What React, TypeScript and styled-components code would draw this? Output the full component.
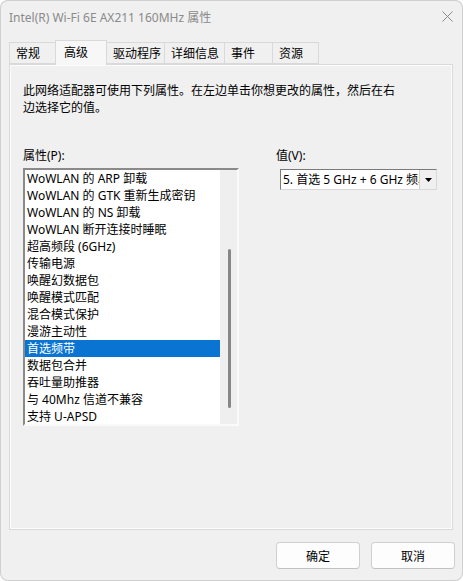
import React from "react";
import styled, { createGlobalStyle } from "styled-components";

const GlobalStyle = createGlobalStyle`
  html, body {
    margin: 0;
    padding: 0;
    background: #ffffff;
  }
  * { box-sizing: border-box; }
`;

const FONT = `"Noto Sans", "Noto Sans CJK SC", sans-serif`;

const Window = styled.div`
  width: 463px;
  height: 581px;
  background: #f0f0f0;
  display: flex;
  flex-direction: column;
  border-radius: 8px;
  box-shadow: inset 0 0 0 1px #cfcfcf;
  overflow: hidden;
  font-family: ${FONT};
  font-size: 12px;
  color: #000;
`;

const TitleBar = styled.div`
  height: 32px;
  padding: 0 9px 0 9px;
  display: flex;
  align-items: center;
  justify-content: space-between;
`;

const Title = styled.span`
  font-size: 12px;
  color: #8a8a8a;
  padding-top: 1px;
`;

const CloseBtn = styled.div`
  width: 20px;
  height: 20px;
  display: flex;
  align-items: center;
  justify-content: center;
  margin-right: -3px;
`;

const TabStrip = styled.div`
  margin-top: 8px;
  padding-left: 9px;
  height: 24px;
  display: flex;
  align-items: flex-end;
  position: relative;
  z-index: 2;
`;

const Tab = styled.div<{ $w: number; $active?: boolean }>`
  width: ${(p) => p.$w}px;
  height: ${(p) => (p.$active ? 25 : 22)}px;
  margin-bottom: ${(p) => (p.$active ? -1 : 0)}px;
  margin-left: -1px;
  &:first-child { margin-left: 0; }
  padding-left: ${(p) => (p.$active ? 8 : 6)}px;
  padding-top: ${(p) => (p.$active ? 3 : 2)}px;
  border: 1px solid #d9d9d9;
  border-bottom: ${(p) => (p.$active ? "none" : "1px solid #d9d9d9")};
  background: ${(p) => (p.$active ? "#f7f7f7" : "#f0f0f0")};
  position: relative;
  z-index: ${(p) => (p.$active ? 2 : 1)};
  font-size: 12px;
  line-height: 17px;
  white-space: nowrap;
`;

const Panel = styled.div`
  margin: 0 10px 0 9px;
  height: 466px;
  border: 1px solid #dadada;
  box-shadow: inset 1px 1px 0 #fbfbfb, inset -1px -1px 0 #fbfbfb;
  background: #f0f0f0;
  padding: 17px 13px;
  display: flex;
  flex-direction: column;
`;

const Description = styled.p`
  margin: 0;
  width: 376px;
  font-size: 12px;
  line-height: 17px;
`;

const Columns = styled.div`
  margin-top: 31px;
  display: flex;
  align-items: flex-start;
`;

const LeftColumn = styled.div`
  width: 216px;
  display: flex;
  flex-direction: column;
`;

const RightColumn = styled.div`
  margin-left: 37px;
  display: flex;
  flex-direction: column;
`;

const Label = styled.div`
  font-size: 12px;
  line-height: 17px;
  margin-bottom: 4px;
`;

const ListBox = styled.div`
  width: 216px;
  height: 258px;
  border-style: solid;
  border-width: 2px;
  border-color: #8a8a8a #fafafa #fafafa #8a8a8a;
  background: #ffffff;
  display: flex;
  overflow: hidden;
`;

const Items = styled.div`
  flex: 1;
  overflow: hidden;
`;

const Item = styled.div<{ $selected?: boolean }>`
  height: 17px;
  line-height: 17px;
  padding-left: 2px;
  font-size: 12px;
  white-space: nowrap;
  background: ${(p) => (p.$selected ? "#0a74d2" : "transparent")};
  color: ${(p) => (p.$selected ? "#ffffff" : "#000000")};
`;

const ScrollTrack = styled.div`
  width: 17px;
  background: #efefef;
  display: flex;
  flex-direction: column;
  align-items: center;
  padding-top: 79px;
`;

const Thumb = styled.div`
  width: 3px;
  height: 159px;
  border-radius: 2px;
  background: #878787;
  margin-left: 1px;
`;

const Select = styled.div`
  margin-top: 1px;
  margin-left: 4px;
  width: 157px;
  height: 21px;
  border-style: solid;
  border-width: 1px;
  border-color: #7a7a7a #d8d8d8 #d8d8d8 #7a7a7a;
  background: #ffffff;
  display: flex;
  align-items: stretch;
`;

const SelectText = styled.div`
  flex: 1;
  overflow: hidden;
  white-space: nowrap;
  font-size: 12px;
  line-height: 19px;
  padding-left: 2px;
`;

const DropButton = styled.div`
  width: 17px;
  background: #f0f0f0;
  border-left: 1px solid #cfcfcf;
  display: flex;
  align-items: center;
  justify-content: center;
`;

const Footer = styled.div`
  margin-top: 12px;
  padding-right: 8px;
  display: flex;
  justify-content: flex-end;
  gap: 11px;
`;

const Button = styled.button`
  width: 84px;
  height: 27px;
  border: 1px solid #d0d0d0;
  border-bottom-color: #c2c2c2;
  border-radius: 4px;
  background: #fdfdfd;
  font-family: ${FONT};
  font-size: 12px;
  color: #000;
  padding: 0;
`;

const tabs = [
  { label: "常规", w: 47 },
  { label: "高级", w: 52, active: true },
  { label: "驱动程序", w: 59 },
  { label: "详细信息", w: 61 },
  { label: "事件", w: 49 },
  { label: "资源", w: 47 },
];

const items = [
  "WoWLAN 的 ARP 卸载",
  "WoWLAN 的 GTK 重新生成密钥",
  "WoWLAN 的 NS 卸载",
  "WoWLAN 断开连接时睡眠",
  "超高频段 (6GHz)",
  "传输电源",
  "唤醒幻数据包",
  "唤醒模式匹配",
  "混合模式保护",
  "漫游主动性",
  "首选频带",
  "数据包合并",
  "吞吐量助推器",
  "与 40Mhz 信道不兼容",
  "支持 U-APSD",
];

export default function App() {
  return (
    <>
      <GlobalStyle />
      <Window>
        <TitleBar>
          <Title>Intel(R) Wi-Fi 6E AX211 160MHz 属性</Title>
          <CloseBtn>
            <svg width="11" height="11" viewBox="0 0 11 11">
              <path d="M0.5 0.5 L10.5 10.5 M10.5 0.5 L0.5 10.5" stroke="#8a8a8a" strokeWidth="1" fill="none" />
            </svg>
          </CloseBtn>
        </TitleBar>
        <TabStrip>
          {tabs.map((t) => (
            <Tab key={t.label} $w={t.w} $active={t.active}>
              {t.label}
            </Tab>
          ))}
        </TabStrip>
        <Panel>
          <Description>
            此网络适配器可使用下列属性。在左边单击你想更改的属性，然后在右边选择它的值。
          </Description>
          <Columns>
            <LeftColumn>
              <Label>属性(P):</Label>
              <ListBox>
                <Items>
                  {items.map((it) => (
                    <Item key={it} $selected={it === "首选频带"}>
                      {it}
                    </Item>
                  ))}
                </Items>
                <ScrollTrack>
                  <Thumb />
                </ScrollTrack>
              </ListBox>
            </LeftColumn>
            <RightColumn>
              <Label>值(V):</Label>
              <Select>
                <SelectText>5. 首选 5 GHz + 6 GHz 频段</SelectText>
                <DropButton>
                  <svg width="7" height="4" viewBox="0 0 7 4">
                    <path d="M0 0 L7 0 L3.5 4 Z" fill="#000" />
                  </svg>
                </DropButton>
              </Select>
            </RightColumn>
          </Columns>
        </Panel>
        <Footer>
          <Button>确定</Button>
          <Button>取消</Button>
        </Footer>
      </Window>
    </>
  );
}
